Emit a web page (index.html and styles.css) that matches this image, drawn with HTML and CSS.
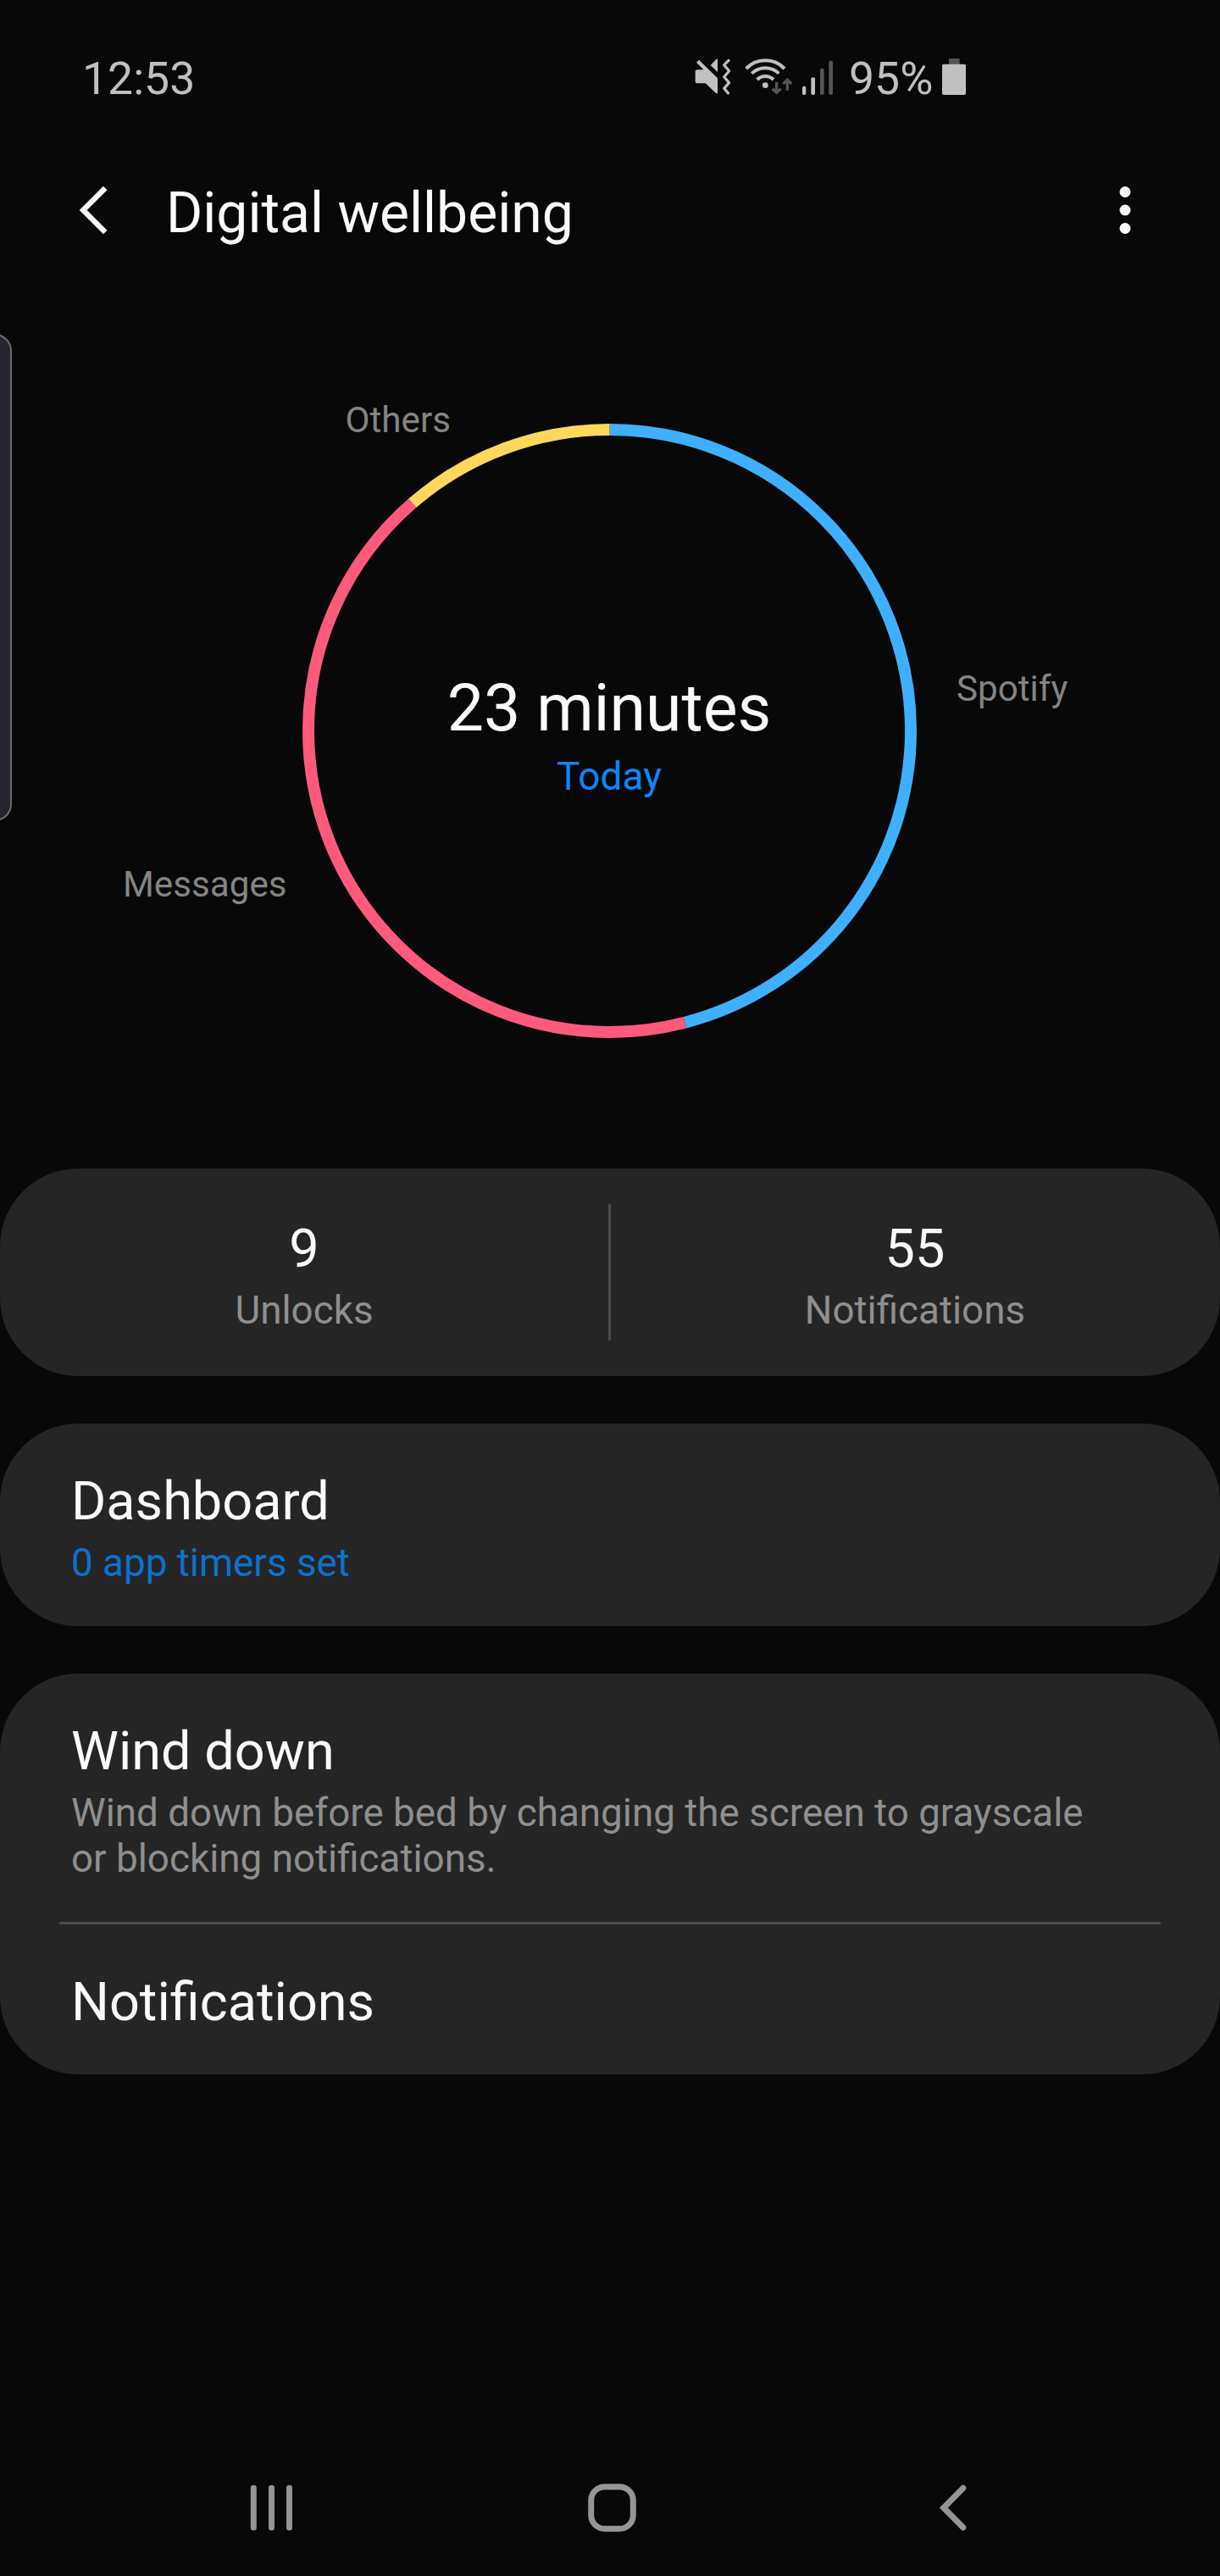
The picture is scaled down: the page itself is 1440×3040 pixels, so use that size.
FILE: index.html
```
<!DOCTYPE html>
<html lang="en">
<head>
<meta charset="utf-8">
<title>Digital wellbeing</title>
<link rel="stylesheet" href="styles.css">
</head>
<body>
<div class="screen">
  <div class="edge-handle"></div>

  <div class="status-bar">
    <span class="status-time">12:53</span>
    <div class="status-icons">
      <svg class="icon-mute" viewBox="60 54 130 134" fill="#c0c0c0">
        <path d="M68 97H91L66 71L75 62L141 127V181H136L98 145H68Q62 145 62 139V103Q62 97 68 97Z"/>
        <path d="M116 81L137 59Q141 57 141 62V105Z"/>
        <path d="M183 61L164 80L182 101L164 122L182 143L164 163L181 183" fill="none" stroke="#c0c0c0" stroke-width="9.5" stroke-linejoin="round"/>
      </svg>
      <svg class="icon-wifi" viewBox="234 54 176 134" fill="none" stroke="#c0c0c0" stroke-width="12">
        <path d="M242 93A94 94 0 0 1 378 93"/>
        <path d="M262 110A70 70 0 0 1 358 110"/>
        <path d="M281 132A41 41 0 0 1 339 132"/>
        <circle cx="310" cy="152" r="10" fill="#c0c0c0" stroke="none"/>
        <path d="M350 140V176M335 164L350 178L365 164M388 170V134M373 147L388 133L403 147" stroke="#555" stroke-width="10"/>
      </svg>
      <svg class="icon-signal" viewBox="438 54 114 134" fill="#c0c0c0">
        <rect x="441" y="155" width="13" height="31" rx="6"/>
        <rect x="472" y="124" width="14" height="62" rx="6"/>
        <rect x="504" y="92" width="14" height="94" rx="6" fill="#555"/>
        <rect x="535" y="65" width="14" height="121" rx="6" fill="#555"/>
      </svg>
      <span class="status-battery">95%</span>
      <svg class="icon-battery" viewBox="936 54 84 134" fill="#c0c0c0">
        <rect x="960" y="57" width="38" height="24" rx="4" fill="#555"/>
        <rect x="936" y="77" width="84" height="109" rx="6"/>
      </svg>
    </div>
  </div>

  <header class="app-bar">
    <svg class="back" viewBox="0 0 36 60" fill="none" stroke="#fafafa" stroke-width="6.4"><path d="M32.2 4L6.2 30L32.2 56"/></svg>
    <h1 class="app-title">Digital wellbeing</h1>
    <svg class="more" viewBox="0 0 14 60" fill="#fafafa"><circle cx="7" cy="8.5" r="6.5"/><circle cx="7" cy="30" r="6.5"/><circle cx="7" cy="51.5" r="6.5"/></svg>
  </header>

  <section class="usage">
    <div class="ring">
      <svg class="ring-chart" viewBox="-362.5 -362.5 725 725" fill="none" stroke-width="14">
        <g transform="rotate(-90)">
          <circle r="355.5" pathLength="360" stroke="#3eb0ff" stroke-dasharray="165.5 360"/>
          <circle r="355.5" pathLength="360" stroke="#ff5a7c" stroke-dasharray="153.6 360" stroke-dashoffset="-165.5"/>
          <circle r="355.5" pathLength="360" stroke="#ffd75f" stroke-dasharray="40.9 360" stroke-dashoffset="-319.1"/>
        </g>
      </svg>
      <div class="ring-text">
        <div class="total">23 minutes</div>
        <div class="period">Today</div>
      </div>
    </div>
    <span class="label label-others">Others</span>
    <span class="label label-spotify">Spotify</span>
    <span class="label label-messages">Messages</span>
  </section>

  <main class="cards">
    <section class="card stats">
      <div class="stat"><div class="item-title">9</div><div class="item-text">Unlocks</div></div>
      <div class="stat-divider"></div>
      <div class="stat"><div class="item-title">55</div><div class="item-text">Notifications</div></div>
    </section>
    <section class="card dashboard">
      <div class="item-title">Dashboard</div>
      <div class="item-text accent">0 app timers set</div>
    </section>
    <section class="card options">
      <div class="option">
        <div class="item-title">Wind down</div>
        <div class="item-text">Wind down before bed by changing the screen to grayscale<br>or blocking notifications.</div>
      </div>
      <div class="option">
        <div class="item-title">Notifications</div>
      </div>
    </section>
  </main>

  <nav class="nav-bar">
    <svg class="nav-recents" viewBox="0 0 51 57" fill="#959595"><rect x=".8" y="1.8" width="7" height="53.4" rx="3.2"/><rect x="22" y="1.8" width="7" height="53.4" rx="3.2"/><rect x="43" y="1.8" width="7" height="53.4" rx="3.2"/></svg>
    <svg class="nav-home" viewBox="0 0 57 57" fill="none" stroke="#959595" stroke-width="7"><rect x="3.7" y="3.7" width="49.6" height="49.6" rx="16"/></svg>
    <svg class="nav-back" viewBox="0 0 34 57" fill="none" stroke="#959595" stroke-width="7" stroke-linecap="round"><path d="M28.8 5.2L5.8 28.5L28.8 51.8"/></svg>
  </nav>
</div>
</body>
</html>
```
FILE: styles.css
```
* { box-sizing: border-box; }
body {
  margin: 0;
  background: #080808;
  color: #fafafa;
  font-family: Roboto, "Liberation Sans", sans-serif;
}
svg { display: block; flex: none; }

.screen {
  position: relative;
  display: flex;
  flex-direction: column;
  width: 1440px;
  height: 3040px;
  overflow: hidden;
  background: #080808;
}

.edge-handle {
  position: absolute;
  left: -40px;
  top: 393.5px;
  width: 54px;
  height: 575px;
  border: 2px solid #6c6b6e;
  border-radius: 20px;
  background: #272430;
}

.status-bar {
  display: flex;
  justify-content: space-between;
  height: 186px;
  padding: 68px 300px 0 97px;
  color: #c0c0c0;
  font-size: 53.5px;
  line-height: 50px;
}
.status-icons { display: flex; align-items: flex-start; }
.icon-mute { width: 43.33px; height: 44.67px; margin-right: 14.67px; }
.icon-wifi { width: 58.67px; height: 44.67px; margin-right: 9.33px; }
.icon-signal { width: 38px; height: 44.67px; margin-right: 18px; }
.status-battery { width: 110px; }
.icon-battery { width: 28px; height: 44.67px; }

.app-bar {
  display: flex;
  align-items: center;
  height: 124px;
  padding: 0 105px 0 92px;
}
.back { width: 36px; height: 60px; }
.app-title {
  flex: 1;
  margin: 8px 0 0 68px;
  font-size: 66px;
  font-weight: 400;
  line-height: 80px;
}
.more { width: 14px; height: 60px; }

.usage {
  position: relative;
  display: flex;
  justify-content: center;
  height: 1069px;
  padding: 190px 1px 0 0;
}
.ring { display: grid; width: 725px; height: 725px; }
.ring-chart, .ring-text { grid-area: 1 / 1; }
.ring-chart { width: 725px; height: 725px; }
.ring-text {
  display: flex;
  flex-direction: column;
  gap: 5.5px;
  padding: 290.7px 1px 0 0;
  text-align: center;
}
.total { font-size: 77px; line-height: 90px; }
.period { color: #0a86fb; font-size: 46px; line-height: 60px; }

/* App names sit around the ring, next to their segments. */
.label {
  position: absolute;
  color: #848484;
  font-size: 42.2px;
  line-height: 50px;
}
.label-others { left: 407.5px; top: 161px; }
.label-spotify { left: 1129px; top: 478px; }
.label-messages { left: 145px; top: 709px; }

.cards { display: flex; flex-direction: column; gap: 56px; }
.card { border-radius: 92px; background: #252525; }
.item-title { font-size: 63px; line-height: 76px; }
.item-text {
  margin-top: 8px;
  color: #8f8f8f;
  font-size: 45.8px;
  line-height: 54px;
}
.accent { color: #0a72cf; }

.stats { display: flex; height: 245px; padding-right: 1px; }
.stat { flex: 1; padding-top: 57px; text-align: center; }
.stat-divider { width: 3px; height: 161px; margin-top: 42px; background: #4b4b4b; }

.dashboard { height: 239px; padding: 54px 84px 0; }

.options { height: 473px; padding: 0 70px; }
.option { padding: 54px 14px 0; }
.option:first-child { height: 296px; border-bottom: 3px solid #4b4b4b; }

.nav-bar {
  display: flex;
  align-items: center;
  height: 161px;
  margin-top: auto;
  padding-left: 295px;
}
.nav-recents { width: 51px; height: 57px; margin-right: 348px; }
.nav-home { width: 57px; height: 57px; margin-right: 357px; }
.nav-back { width: 34px; height: 57px; }
```
